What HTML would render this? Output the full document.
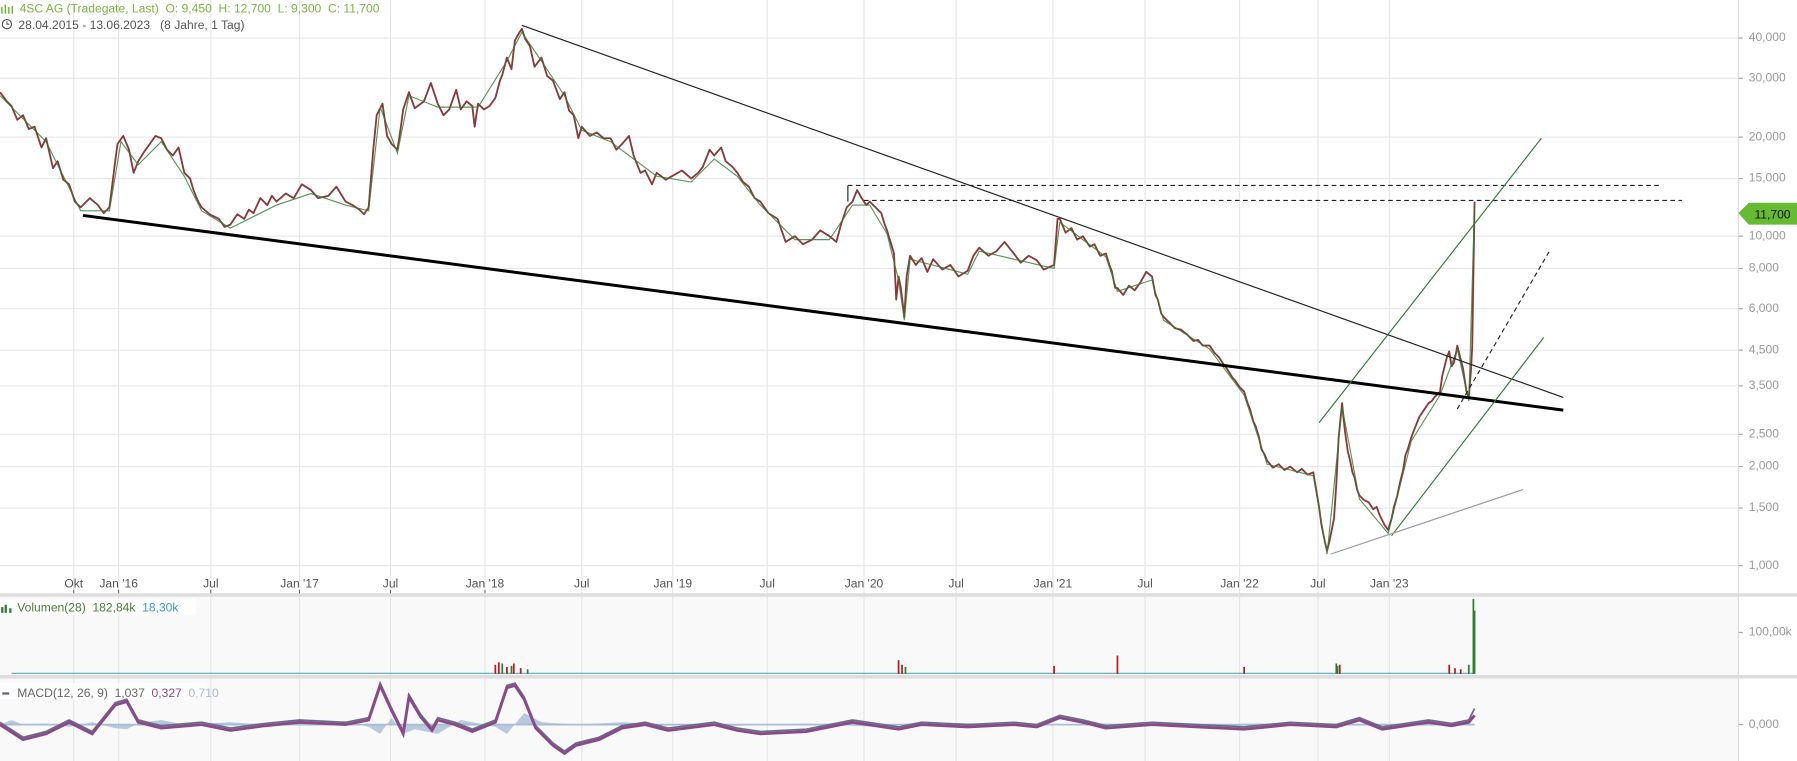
<!DOCTYPE html>
<html><head><meta charset="utf-8"><style>
html,body{margin:0;padding:0;background:#fff;width:1797px;height:761px;overflow:hidden}
svg{display:block}
text{font-family:"Liberation Sans",sans-serif;white-space:pre}
</style></head><body>
<svg width="1797" height="761" viewBox="0 0 1797 761">
<rect x="0" y="0" width="1797" height="761" fill="#fff"/>
<g transform="scale(1.152)">
<rect x="0" y="518" width="1509" height="143" fill="#f9f9f9"/>
<g stroke="#e8e8e8" stroke-width="1">
<line x1="0" y1="33" x2="1509" y2="33"/><line x1="0" y1="68" x2="1509" y2="68"/><line x1="0" y1="119" x2="1509" y2="119"/><line x1="0" y1="155" x2="1509" y2="155"/><line x1="0" y1="205" x2="1509" y2="205"/><line x1="0" y1="233" x2="1509" y2="233"/><line x1="0" y1="268" x2="1509" y2="268"/><line x1="0" y1="304" x2="1509" y2="304"/><line x1="0" y1="335" x2="1509" y2="335"/><line x1="0" y1="377" x2="1509" y2="377"/><line x1="0" y1="405" x2="1509" y2="405"/><line x1="0" y1="441" x2="1509" y2="441"/><line x1="0" y1="491" x2="1509" y2="491"/>
</g>
<g stroke="#e6e6e6" stroke-width="1">
<line x1="64" y1="0" x2="64" y2="661"/><line x1="103" y1="0" x2="103" y2="661"/><line x1="183" y1="0" x2="183" y2="661"/><line x1="260" y1="0" x2="260" y2="661"/><line x1="339" y1="0" x2="339" y2="661"/><line x1="421" y1="0" x2="421" y2="661"/><line x1="505" y1="0" x2="505" y2="661"/><line x1="584" y1="0" x2="584" y2="661"/><line x1="666" y1="0" x2="666" y2="661"/><line x1="750" y1="0" x2="750" y2="661"/><line x1="830" y1="0" x2="830" y2="661"/><line x1="914" y1="0" x2="914" y2="661"/><line x1="994" y1="0" x2="994" y2="661"/><line x1="1076" y1="0" x2="1076" y2="661"/><line x1="1144" y1="0" x2="1144" y2="661"/><line x1="1206" y1="0" x2="1206" y2="661"/>
</g>
<rect x="0" y="515" width="1560" height="3" fill="#ddd"/>
<rect x="0" y="586" width="1560" height="3" fill="#ddd"/>
<line x1="1509" y1="0" x2="1509" y2="661" stroke="#ddd"/>
<g fill="#999" font-size="10.5">
<text x="1518" y="33" dominant-baseline="middle">40,000</text>
<text x="1518" y="68" dominant-baseline="middle">30,000</text>
<text x="1518" y="119" dominant-baseline="middle">20,000</text>
<text x="1518" y="155" dominant-baseline="middle">15,000</text>
<text x="1518" y="205" dominant-baseline="middle">10,000</text>
<text x="1518" y="233" dominant-baseline="middle">8,000</text>
<text x="1518" y="268" dominant-baseline="middle">6,000</text>
<text x="1518" y="304" dominant-baseline="middle">4,500</text>
<text x="1518" y="335" dominant-baseline="middle">3,500</text>
<text x="1518" y="377" dominant-baseline="middle">2,500</text>
<text x="1518" y="405" dominant-baseline="middle">2,000</text>
<text x="1518" y="441" dominant-baseline="middle">1,500</text>
<text x="1518" y="491" dominant-baseline="middle">1,000</text>
<text x="1518" y="549" dominant-baseline="middle">100,00k</text>
<text x="1518" y="629" dominant-baseline="middle">0,000</text>
</g>
<g stroke="#aaa"><line x1="1509" y1="33" x2="1513" y2="33"/><line x1="1509" y1="68" x2="1513" y2="68"/><line x1="1509" y1="119" x2="1513" y2="119"/><line x1="1509" y1="155" x2="1513" y2="155"/><line x1="1509" y1="205" x2="1513" y2="205"/><line x1="1509" y1="233" x2="1513" y2="233"/><line x1="1509" y1="268" x2="1513" y2="268"/><line x1="1509" y1="304" x2="1513" y2="304"/><line x1="1509" y1="335" x2="1513" y2="335"/><line x1="1509" y1="377" x2="1513" y2="377"/><line x1="1509" y1="405" x2="1513" y2="405"/><line x1="1509" y1="441" x2="1513" y2="441"/><line x1="1509" y1="491" x2="1513" y2="491"/><line x1="1509" y1="549" x2="1513" y2="549"/><line x1="1509" y1="629" x2="1513" y2="629"/></g>
<g fill="#555" font-size="10.5" text-anchor="middle">
<text x="64" y="510">Okt</text><text x="103" y="510">Jan '16</text><text x="183" y="510">Jul</text><text x="260" y="510">Jan '17</text><text x="339" y="510">Jul</text><text x="421" y="510">Jan '18</text><text x="505" y="510">Jul</text><text x="584" y="510">Jan '19</text><text x="666" y="510">Jul</text><text x="750" y="510">Jan '20</text><text x="830" y="510">Jul</text><text x="914" y="510">Jan '21</text><text x="994" y="510">Jul</text><text x="1076" y="510">Jan '22</text><text x="1144" y="510">Jul</text><text x="1206" y="510">Jan '23</text>
</g>
<g stroke="#555" stroke-width="0.8"><line x1="64" y1="512" x2="64" y2="515"/><line x1="103" y1="512" x2="103" y2="515"/><line x1="183" y1="512" x2="183" y2="515"/><line x1="260" y1="512" x2="260" y2="515"/><line x1="339" y1="512" x2="339" y2="515"/><line x1="421" y1="512" x2="421" y2="515"/></g>
<polyline fill="none" stroke="#8a3a3a" stroke-width="1.6" stroke-linejoin="round" points="0,80 6,88 10,92 15,104 20,100 25,112 30,110 36,128 40,120 46,146 50,140 55,156 60,160 65,175 70,180 78,172 85,178 90,185 95,180 100,140 102,125 107,118 112,130 116,150 120,140 125,132 130,125 135,118 140,120 145,130 150,135 155,128 160,150 165,155 168,165 172,175 175,180 182,186 190,190 195,197 200,195 206,186 212,190 216,182 220,185 226,172 232,178 236,170 240,175 248,168 255,172 262,160 270,165 276,172 285,170 292,162 300,175 306,178 312,182 316,186 320,180 324,130 327,100 332,90 336,118 340,125 345,130 348,110 350,95 355,80 360,94 368,88 374,72 380,90 385,100 390,95 396,78 400,95 405,88 410,92 412,110 415,90 420,95 425,92 430,85 434,70 436,65 440,50 444,60 447,35 451,28 453,25 456,34 460,40 464,58 470,50 475,66 480,70 486,86 490,80 494,96 498,100 502,120 505,110 512,118 518,115 524,120 530,120 535,130 540,125 546,118 550,135 556,150 560,148 566,160 570,150 578,156 585,152 592,148 600,155 606,150 610,145 616,130 620,135 626,128 630,140 636,145 640,150 645,158 650,162 655,172 660,175 667,185 675,190 682,210 690,205 697,212 705,208 712,200 720,205 726,210 730,195 735,180 740,175 744,165 748,172 752,178 755,175 760,180 765,185 768,195 770,200 773,210 776,220 778,260 780,240 782,250 785,275 787,240 790,222 795,230 800,224 805,236 810,225 818,234 825,230 832,240 840,235 845,222 850,215 858,222 865,218 872,210 880,220 886,228 893,222 900,226 906,234 915,230 918,190 920,190 925,202 930,198 935,208 940,205 946,214 950,212 955,222 960,220 963,230 965,235 968,250 970,250 975,256 980,248 985,252 990,245 995,236 1000,240 1003,256 1005,260 1008,272 1010,275 1015,280 1020,285 1025,286 1030,290 1036,296 1040,295 1044,300 1050,300 1054,306 1058,310 1062,316 1065,320 1070,328 1072,330 1076,336 1080,340 1083,350 1085,355 1088,366 1090,370 1093,380 1095,390 1098,395 1100,400 1105,406 1110,403 1115,408 1120,405 1126,410 1130,407 1135,412 1140,410 1143,428 1145,440 1147,455 1150,470 1152,478 1154,470 1156,460 1158,450 1160,420 1162,380 1165,350 1167,370 1168,378 1170,392 1172,400 1174,410 1176,415 1178,425 1180,430 1184,434 1188,436 1192,442 1195,440 1198,448 1200,452 1202,456 1205,460 1208,450 1210,440 1213,430 1215,420 1218,408 1220,395 1222,390 1225,380 1228,372 1232,362 1236,356 1240,350 1243,348 1245,345 1248,342 1250,340 1252,326 1254,318 1256,310 1258,305 1260,318 1262,315 1264,306 1265,300 1268,312 1270,320 1273,340 1275,345 1277,320 1278,300 1280,175"/>
<polyline fill="none" stroke="#2e7d32" stroke-width="1" opacity="0.8" points="0,83 20,103 40,123 60,163 70,183 95,183 105,123 120,143 140,123 160,153 175,183 200,198 240,178 270,168 300,178 320,183 330,93 345,133 355,83 380,93 415,93 440,53 453,28 470,53 490,83 505,113 530,123 570,153 600,158 620,138 640,153 660,178 690,208 720,208 740,178 755,178 770,203 780,243 785,278 790,225 840,238 850,218 915,233 920,193 940,208 960,223 970,253 1000,243 1010,278 1050,303 1080,343 1100,403 1140,413 1152,481 1165,353 1180,433 1205,463 1225,383 1250,343 1265,303 1275,348 1280,178"/>
<line x1="453" y1="22" x2="1357" y2="345" stroke="#222" stroke-width="1"/>
<line x1="72" y1="187" x2="1357" y2="356" stroke="#000" stroke-width="2.6"/>
<line x1="736" y1="161" x2="1443" y2="161" stroke="#222" stroke-width="1" stroke-dasharray="4,3"/>
<line x1="750" y1="174" x2="1460" y2="174" stroke="#222" stroke-width="1" stroke-dasharray="4,3"/>
<line x1="736" y1="161" x2="736" y2="175" stroke="#222" stroke-width="1"/>
<line x1="1265" y1="355" x2="1345" y2="218" stroke="#222" stroke-width="1" stroke-dasharray="4,3"/>
<line x1="1145" y1="367" x2="1338" y2="120" stroke="#2e7d32" stroke-width="1"/>
<line x1="1208" y1="465" x2="1340" y2="293" stroke="#2e7d32" stroke-width="1"/>
<line x1="1155" y1="481" x2="1322" y2="425" stroke="#999" stroke-width="1"/>
<polygon points="1509,185 1518,176 1560,176 1560,195 1518,195" fill="#66bb33"/>
<text x="1523" y="189.5" font-size="10.5" fill="#111">11,700</text>
<g font-size="10.5">
<g fill="#7cb342"><rect x="1" y="6" width="1.3" height="6"/><rect x="4" y="4" width="1.3" height="8"/><rect x="7" y="6" width="1.3" height="6"/><rect x="10" y="5" width="1.3" height="7"/></g>
<text x="17" y="11" fill="#7cb342">4SC AG (Tradegate, Last)  O: 9,450  H: 12,700  L: 9,300  C: 11,700</text>
<circle cx="6" cy="21" r="4" fill="none" stroke="#555"/>
<path d="M6 18.5V21H8" fill="none" stroke="#555" stroke-width="0.9"/>
<text x="16" y="25" fill="#555">28.04.2015 - 13.06.2023   (8 Jahre, 1 Tag)</text>
</g>
<rect x="0" y="520" width="170" height="14" fill="#fff" opacity="0.8"/>
<g fill="#2e7d32"><rect x="1" y="527" width="2" height="5"/><rect x="4" y="525" width="2" height="7"/><rect x="8" y="528" width="2" height="4"/></g>
<text x="15" y="531" font-size="10.5" fill="#4a7c3a">Volumen(28)  182,84k  <tspan fill="#3a9ac0">18,30k</tspan></text>
<line x1="10" y1="584.5" x2="1280" y2="584.5" stroke="#5ab" stroke-width="1"/>
<path d="M430 585V577M433 585V575M440 585V579M446 585V576M452 585V580M780 585V573M783 585V577M970 585V569M915 585V578M1080 585V579M1163 585V577M1258 585V577M1263 585V580M1268 585V581" stroke="#b71c1c" stroke-width="1.5"/>
<path d="M436 585V576M444 585V578M458 585V581M786 585V579M1160 585V576M1161 585V578M1275 585V577" stroke="#2e7d32" stroke-width="1.5"/>
<path d="M1279 585V520M1280 585V530" stroke="#2e7d32" stroke-width="1.5"/>
<rect x="0" y="593" width="180" height="14" fill="#fff" opacity="0.8"/>
<rect x="2" y="601" width="6" height="2" fill="#667"/>
<text x="15" y="605" font-size="10.5" fill="#666">MACD(12, 26, 9)  1,037  <tspan fill="#8a4a8a">0,327</tspan>  <tspan fill="#aab8cc">0,710</tspan></text>
<path d="M0 629 L10 625 20 629 40 628 60 631 80 627 100 632 110 633 120 628 140 625 160 629 200 627 240 630 260 628 300 626 320 631 330 637 340 623 350 637 360 633 380 637 400 625 430 631 440 637 455 619 470 627 500 629 540 627 580 629 640 630 700 628 760 631 800 627 900 629 960 628 1000 630 1100 628 1200 629 1280 629 Z" fill="#a8bcd6" opacity="0.8"/>
<line x1="0" y1="629" x2="1280" y2="629" stroke="#a8bcd6" stroke-width="1.5"/>
<polyline fill="none" stroke="#6a6a8a" stroke-width="1.5" points="0,627 20,640 40,635 60,625 80,635 100,610 110,607 120,625 140,630 175,627 200,632 230,628 260,625 300,627 320,623 330,593 340,615 350,635 355,603 365,620 375,632 380,623 395,627 410,633 430,625 440,595 447,593 455,605 465,630 480,645 490,652 500,645 520,640 540,630 560,627 580,632 620,627 640,632 660,635 700,633 740,625 780,631 800,627 840,629 880,627 900,629 920,621 940,625 960,630 1000,627 1040,629 1080,631 1120,627 1160,629 1180,623 1200,631 1240,625 1260,628 1275,625 1280,615"/>
<polyline fill="none" stroke="#8a4a8a" stroke-width="2.5" points="0,629 20,642 40,637 60,627 80,637 100,612 110,609 120,627 140,632 175,629 200,634 230,630 260,627 300,629 320,625 330,595 340,617 350,637 355,605 365,622 375,634 380,625 395,629 410,635 430,627 440,597 447,595 455,607 465,632 480,647 490,654 500,647 520,642 540,632 560,629 580,634 620,629 640,634 660,637 700,635 740,627 780,633 800,629 840,631 880,629 900,631 920,623 940,627 960,632 1000,629 1040,631 1080,633 1120,629 1160,631 1180,625 1200,633 1240,627 1260,630 1275,627 1280,621"/>
</g>
</svg>
</body></html>
